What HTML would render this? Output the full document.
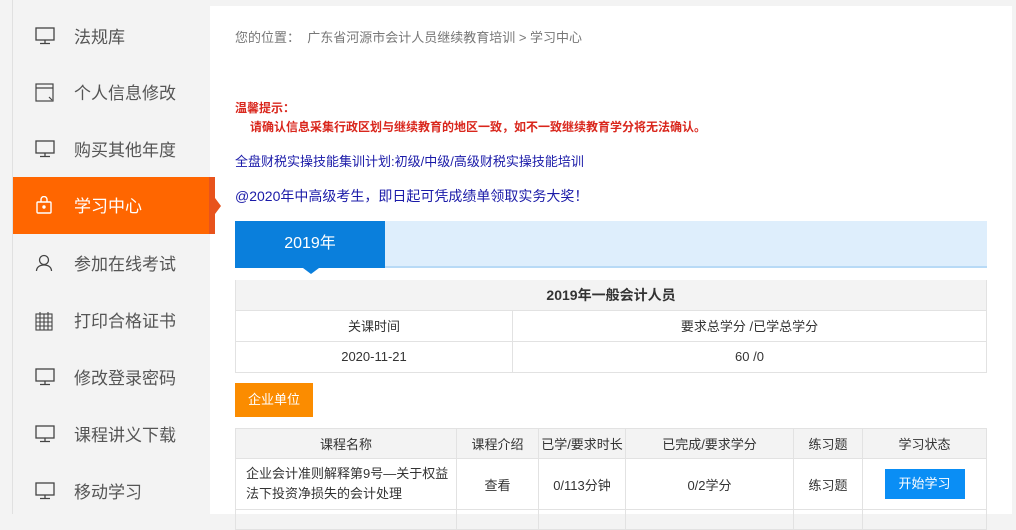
<!DOCTYPE html>
<html><head><meta charset="utf-8"><style>
*{margin:0;padding:0;box-sizing:border-box}
body{width:1016px;height:514px;overflow:hidden;background:#f3f3f3;font-family:"Liberation Sans","Noto Sans CJK SC",sans-serif;font-size:13px;color:#333;position:relative}
.lb{position:absolute;left:12px;top:0;width:1px;height:514px;background:#e0e0e0}
.side{position:absolute;left:13px;top:0;width:197px}
.it{position:absolute;left:0;width:197px;height:57px;color:#555;font-size:17px}
.it svg{position:absolute;left:22px;top:19px}
.it span{position:absolute;left:61px;top:18px;line-height:24px}
.main{position:absolute;left:210px;top:6px;width:802px;height:508px;background:#fff}
.a{position:absolute;white-space:nowrap}
table{border-collapse:collapse;position:absolute;table-layout:fixed}
td{border:1px solid #e2e2e2;text-align:center;font-size:13px;color:#333}
</style></head><body>
<div class="lb"></div>
<div class="main"></div>
<div class="a" style="left:13px;top:177px;width:196px;height:57px;background:#ff6600"></div>
<div class="a" style="left:209px;top:177px;width:6px;height:57px;background:#e8531c"></div>
<div class="a" style="left:215px;top:198px;width:0;height:0;border-top:8px solid transparent;border-bottom:8px solid transparent;border-left:6px solid #e8531c"></div>
<div class="side">
<div class="it" style="top:8px"><svg width="20" height="18" viewBox="0 0 20 18" fill="none" stroke="#444" stroke-width="1.3"><rect x="1" y="1" width="18" height="12"/><path d="M10 13v3M5 16.5h10"/></svg><span>法规库</span></div>
<div class="it" style="top:64px"><svg width="20" height="20" viewBox="0 0 20 20" fill="none" stroke="#444" stroke-width="1.2"><rect x="1" y="1" width="17" height="17"/><path d="M1 5h17M14 14l3 3"/></svg><span>个人信息修改</span></div>
<div class="it" style="top:121px"><svg width="20" height="18" viewBox="0 0 20 18" fill="none" stroke="#444" stroke-width="1.3"><rect x="1" y="1" width="18" height="12"/><path d="M10 13v3M5 16.5h10"/></svg><span>购买其他年度</span></div>
<div class="it" style="top:177px;color:#fff"><svg width="18" height="18" viewBox="0 0 18 18" fill="none" stroke="#fff" stroke-width="1.4"><rect x="2" y="6" width="14" height="11" rx="1"/><path d="M6 6V3.5a3 3 0 0 1 6 0V6"/><circle cx="9" cy="11" r="1" fill="#fff"/></svg><span>学习中心</span></div>
<div class="it" style="top:235px"><svg width="18" height="18" viewBox="0 0 18 18" fill="none" stroke="#444" stroke-width="1.3"><circle cx="9" cy="6" r="4.5"/><path d="M1.5 17c0-4 3.5-6 7.5-6s7.5 2 7.5 6"/></svg><span>参加在线考试</span></div>
<div class="it" style="top:292px"><svg width="18" height="20" viewBox="0 0 18 20" fill="none" stroke="#444" stroke-width="1.1"><rect x="1" y="3" width="16" height="16"/><path d="M1 7h16M1 11h16M1 15h16M5 3v16M9 3v16M13 3v16M5 1v3M13 1v3"/></svg><span>打印合格证书</span></div>
<div class="it" style="top:349px"><svg width="20" height="18" viewBox="0 0 20 18" fill="none" stroke="#444" stroke-width="1.3"><rect x="1" y="1" width="18" height="12"/><path d="M10 13v3M5 16.5h10"/></svg><span>修改登录密码</span></div>
<div class="it" style="top:406px"><svg width="20" height="18" viewBox="0 0 20 18" fill="none" stroke="#444" stroke-width="1.3"><rect x="1" y="1" width="18" height="12"/><path d="M10 13v3M5 16.5h10"/></svg><span>课程讲义下载</span></div>
<div class="it" style="top:463px"><svg width="20" height="18" viewBox="0 0 20 18" fill="none" stroke="#444" stroke-width="1.3"><rect x="1" y="1" width="18" height="12"/><path d="M10 13v3M5 16.5h10"/></svg><span>移动学习</span></div>
</div>
<div class="a" style="left:235px;top:27px;color:#777;font-size:13px">您的位置：&nbsp;&nbsp;广东省河源市会计人员继续教育培训 &gt; 学习中心</div>
<div class="a" style="left:235px;top:99px;color:#d9261c;font-size:12px;font-weight:bold">温馨提示：</div>
<div class="a" style="left:250px;top:118px;color:#d9261c;font-size:12px;font-weight:bold">请确认信息采集行政区划与继续教育的地区一致，如不一致继续教育学分将无法确认。</div>
<div class="a" style="left:235px;top:151px;color:#1a1aa8;font-size:13px">全盘财税实操技能集训计划:初级/中级/高级财税实操技能培训</div>
<div class="a" style="left:235px;top:186px;color:#1a1aa8;font-size:14px">@2020年中高级考生，即日起可凭成绩单领取实务大奖！</div>
<div class="a" style="left:235px;top:221px;width:752px;height:47px;background:#deeefc;border-bottom:2px solid #b8daf6"></div>
<div class="a" style="left:235px;top:221px;width:150px;height:47px;background:#0a7fdc;color:#fff;font-size:16px;text-align:center;line-height:46px">2019年</div>
<div class="a" style="left:303px;top:268px;border-left:8px solid transparent;border-right:8px solid transparent;border-top:6px solid #0a7fdc"></div>
<table style="left:235px;top:280px;width:752px">
<colgroup><col style="width:277px"><col></colgroup>
<tr style="height:30px;background:#f3f3f3"><td colspan="2" style="font-weight:bold;font-size:14px;border-top:none">2019年一般会计人员</td></tr>
<tr style="height:31px"><td>关课时间</td><td>要求总学分 /已学总学分</td></tr>
<tr style="height:31px"><td>2020-11-21</td><td>60 /0</td></tr>
</table>
<div class="a" style="left:235px;top:383px;width:78px;height:34px;background:#fb8c00;color:#fff;text-align:center;line-height:34px;font-size:13px">企业单位</div>
<table style="left:235px;top:428px;width:752px">
<colgroup><col style="width:221px"><col style="width:82px"><col style="width:87px"><col style="width:168px"><col style="width:69px"><col></colgroup>
<tr style="height:30px;background:#f3f3f3"><td>课程名称</td><td>课程介绍</td><td>已学/要求时长</td><td>已完成/要求学分</td><td>练习题</td><td>学习状态</td></tr>
<tr style="height:51px"><td style="text-align:left;padding-left:10px;line-height:20px">企业会计准则解释第9号—关于权益法下投资净损失的会计处理</td><td>查看</td><td>0/113分钟</td><td>0/2学分</td><td>练习题</td><td><div style="margin:0 auto;width:80px;height:30px;background:#0a8ef5;color:#fff;line-height:30px">开始学习</div></td></tr>
<tr style="height:20px"><td></td><td></td><td></td><td></td><td></td><td></td></tr>
</table>
</body></html>
